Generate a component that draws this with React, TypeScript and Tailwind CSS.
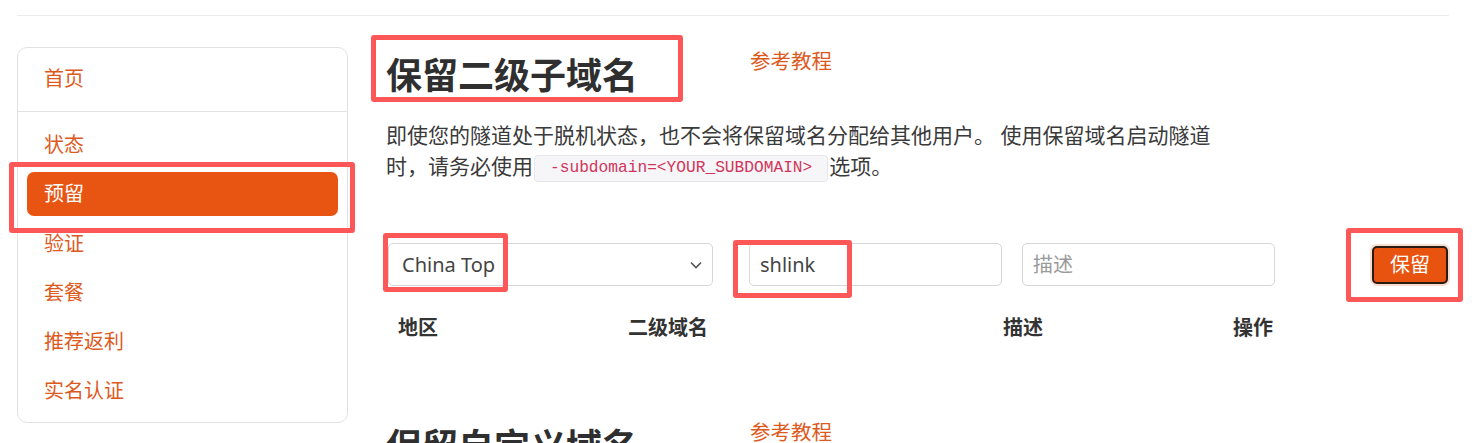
import React from "react";

const navItems = ["状态", "预留", "验证", "套餐", "推荐返利", "实名认证"];

function RedBox({ className }: { className: string }) {
  return (
    <div
      className={`pointer-events-none absolute rounded-[3px] border-[5px] border-[#fd5757] ${className}`}
    />
  );
}

export default function App() {
  return (
    <div className="relative h-[443px] w-[1472px] overflow-hidden bg-white font-['Noto_Sans','Noto_Sans_CJK_SC',sans-serif] text-[#333]">
      <div className="px-[17px] pt-[15px]">
        <div className="w-[1432px] border-t border-[#ececec]" />
        <div className="mt-[31px] flex items-start">
          {/* Sidebar */}
          <div className="h-[376px] w-[331px] shrink-0 rounded-[10px] border border-[#e2e2e2]">
            <div className="px-[9px] pt-[9px]">
              <div className="flex h-[44px] items-center pl-[17px] text-[20px] text-[#dd5a1e]">
                首页
              </div>
            </div>
            <div className="mt-[10px] border-t border-[#e2e2e2]" />
            <div className="flex flex-col gap-[5.3px] px-[9px] pt-[11px]">
              {navItems.map((item) =>
                item === "预留" ? (
                  <div
                    key={item}
                    className="flex h-[44px] items-center rounded-[7px] bg-[#e85412] pl-[17px] text-[20px] text-white"
                  >
                    {item}
                  </div>
                ) : (
                  <div
                    key={item}
                    className="flex h-[44px] items-center pl-[17px] text-[20px] text-[#dd5a1e]"
                  >
                    {item}
                  </div>
                )
              )}
            </div>
          </div>

          {/* Main */}
          <div className="ml-[38px] flex-1">
            <div className="flex items-start">
              <h2 className="mt-[7px] w-[364px] text-[36px] font-bold leading-[44px] text-[#2f2f2f]">
                保留二级子域名
              </h2>
              <a className="text-[20.5px] leading-[28px] text-[#dd5a1e]">参考教程</a>
            </div>
            <p className="mt-[22px] w-[830px] text-[21px] leading-[31px] text-[#3a3a3a]">
              即使您的隧道处于脱机状态，也不会将保留域名分配给其他用户。 使用保留域名启动隧道时，请务必使用
              <code className="mx-[1px] inline-block h-[27px] rounded-[4px] border border-[#e6e6ea] bg-[#f6f6f8] px-[15px] align-middle font-['Liberation_Mono',monospace] text-[16.2px] leading-[25px] text-[#d1345b]">
                -subdomain=&lt;YOUR_SUBDOMAIN&gt;
              </code>
              选项。
            </p>

            {/* Form */}
            <div className="mt-[61px] flex items-center">
              <div className="ml-[2px] flex h-[43px] w-[325px] items-center justify-between rounded-[5px] border border-[#d6d6d6] pl-[13px] pr-[10px] text-[20px] text-[#444]">
                <span>China Top</span>
                <svg width="12" height="8" viewBox="0 0 12 8" fill="none">
                  <path d="M1 1.5l5 5 5-5" stroke="#555" strokeWidth="1.6" />
                </svg>
              </div>
              <div className="ml-[36px] flex h-[43px] w-[253px] items-center rounded-[5px] border border-[#d6d6d6] pl-[10px] text-[20px] text-[#444]">
                shlink
              </div>
              <div className="ml-[20px] flex h-[43px] w-[253px] items-center rounded-[5px] border border-[#d6d6d6] pl-[10px] text-[20px] text-[#9a9a9a]">
                描述
              </div>
              <button className="ml-[97px] flex h-[38px] w-[76px] items-center justify-center rounded-[5px] border-2 border-[#2a1a12] bg-[#e8540f] text-[20px] text-white shadow-[0_0_0_2px_#f6dccf]">
                保留
              </button>
            </div>

            {/* Table header */}
            <div className="mt-[28px] flex pl-[12px] text-[20px] font-bold leading-[28px] text-[#333]">
              <div className="w-[230px]">地区</div>
              <div className="w-[375px]">二级域名</div>
              <div className="w-[230px]">描述</div>
              <div>操作</div>
            </div>

            {/* Second section */}
            <div className="mt-[76px] flex items-start">
              <h2 className="mt-[7px] w-[364px] text-[36px] font-bold leading-[44px] text-[#2f2f2f]">
                保留自定义域名
              </h2>
              <a className="text-[20.5px] leading-[28px] text-[#dd5a1e]">参考教程</a>
            </div>
          </div>
        </div>
      </div>

      {/* Annotation boxes */}
      <RedBox className="left-[371px] top-[35px] h-[67px] w-[312px]" />
      <RedBox className="left-[9px] top-[162px] h-[71px] w-[346px]" />
      <RedBox className="left-[383px] top-[233px] h-[59px] w-[125px]" />
      <RedBox className="left-[733px] top-[240px] h-[58px] w-[119px]" />
      <RedBox className="left-[1346px] top-[228px] h-[74px] w-[117px]" />
    </div>
  );
}
